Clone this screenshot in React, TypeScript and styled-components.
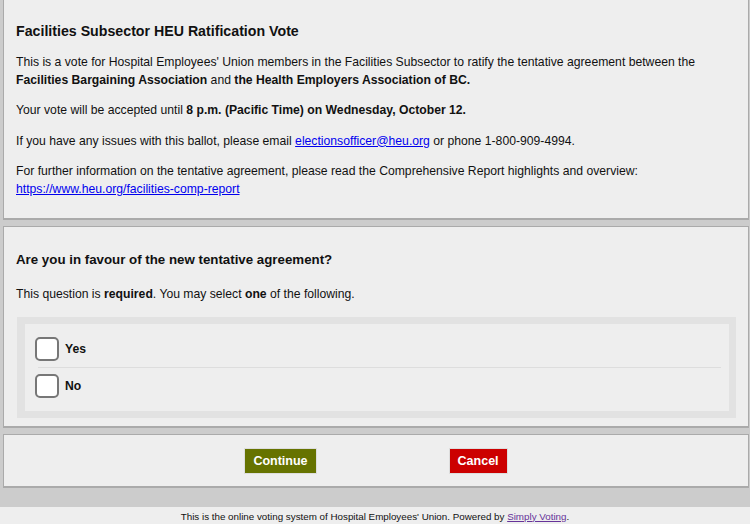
import styled, { createGlobalStyle } from "styled-components"

const GlobalStyle = createGlobalStyle`
body {
  margin: 0;
  background-color: #cccccc;
  font-family: Arial, "Liberation Sans", sans-serif;
  font-size: 12.2px;
  color: #111;
}
`

const App = () => {
    return (
        <>
            <GlobalStyle />
            <Page>
                <Panel $first>
                    <Title>Facilities Subsector HEU Ratification Vote</Title>
                    <Text>
                        This is a vote for Hospital Employees' Union members in the Facilities Subsector to ratify the tentative agreement between the{" "}
                        <b>Facilities Bargaining Association</b> and <b>the Health Employers Association of BC.</b>
                    </Text>
                    <Text>
                        Your vote will be accepted until <b>8 p.m. (Pacific Time) on Wednesday, October 12.</b>
                    </Text>
                    <Text>
                        If you have any issues with this ballot, please email <Link href="#">electionsofficer@heu.org</Link> or phone 1-800-909-4994.
                    </Text>
                    <Text>
                        For further information on the tentative agreement, please read the Comprehensive Report highlights and overview:<br />
                        <Link href="#">https://www.heu.org/facilities-comp-report</Link>
                    </Text>
                </Panel>

                <Panel>
                    <Question>Are you in favour of the new tentative agreement?</Question>
                    <Text>
                        This question is <b>required</b>. You may select <b>one</b> of the following.
                    </Text>
                    <OptionsOuter>
                        <OptionsInner>
                            <Option>
                                <Box type="checkbox" />
                                <OptionLabel>Yes</OptionLabel>
                            </Option>
                            <Option>
                                <Box type="checkbox" />
                                <OptionLabel>No</OptionLabel>
                            </Option>
                        </OptionsInner>
                    </OptionsOuter>
                </Panel>

                <ButtonPanel>
                    <Button $color="#667300">Continue</Button>
                    <Button $color="#cc0000">Cancel</Button>
                </ButtonPanel>
            </Page>
            <Footer>
                This is the online voting system of Hospital Employees' Union. Powered by <FooterLink href="#">Simply Voting</FooterLink>.
            </Footer>
        </>
    )
}

const Page = styled.div`
display: flex;
flex-direction: column;
gap: 6px;
padding: 0 1px 19px 3px;
`

const Panel = styled.div<{ $first?: boolean }>`
background-color: #eeeeee;
border: 1px solid #aaaaaa;
border-bottom: 2px solid #aaaaaa;
padding: 8px 12px 7px;
margin-top: ${(p) => (p.$first ? "-1px" : "0")};
`

const Title = styled.h1`
font-size: 14.2px;
line-height: 18px;
margin: 14px 0 14px;
`

const Text = styled.p`
margin: 13px 0;
line-height: 17.5px;
`

const Link = styled.a`
color: #0000ee;
text-decoration: underline;
`

const Question = styled.h2`
font-size: 13.3px;
line-height: 17px;
margin: 16px 0 18px;
`

const OptionsOuter = styled.div`
background-color: #e2e2e2;
padding: 7px 7px 7px 8px;
margin: 0 0 1px 1px;
`

const OptionsInner = styled.div`
background-color: #eeeeee;
padding: 7px 8px 7px 13px;
`

const Option = styled.label`
display: flex;
align-items: center;
gap: 6px;
padding: 6px 0;
& + & {
  border-top: 1px solid #dddddd;
}
`

const Box = styled.input`
appearance: none;
margin: 0 0 0 -3px;
width: 24px;
height: 24px;
border: 2px solid #777777;
border-radius: 5px;
background-color: #ffffff;
box-sizing: border-box;
`

const OptionLabel = styled.span`
font-weight: bold;
`

const ButtonPanel = styled.div`
display: flex;
justify-content: center;
gap: 132px;
background-color: #eeeeee;
border: 1px solid #aaaaaa;
border-bottom: 2px solid #aaaaaa;
padding: 13px 12px 12px;
`

const Button = styled.button<{ $color: string }>`
height: 26px;
padding: 0 8px;
border: 1px solid #dddddd;
background-color: ${(p) => p.$color};
color: #ffffff;
font-family: Arial, "Liberation Sans", sans-serif;
font-size: 12.5px;
font-weight: bold;
`

const Footer = styled.div`
background-color: #eeeeee;
text-align: center;
font-size: 9.8px;
line-height: 12px;
padding: 4px 0 6px;
`

const FooterLink = styled.a`
color: #663399;
text-decoration: underline;
`

export default App
